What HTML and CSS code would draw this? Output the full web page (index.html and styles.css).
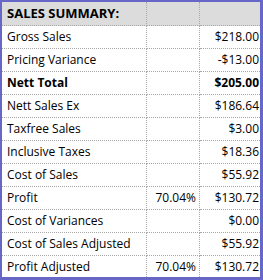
FILE: index.html
```html
<!DOCTYPE html>
<html>
<head>
<meta charset="utf-8">
<link rel="stylesheet" href="styles.css">
</head>
<body>
<div class="panel">
  <table class="summary">
    <colgroup>
      <col class="c-label">
      <col class="c-pct">
      <col class="c-amt">
    </colgroup>
    <tr class="head">
      <td>SALES SUMMARY:</td><td></td><td></td>
    </tr>
    <tr><td>Gross Sales</td><td></td><td class="num">$218.00</td></tr>
    <tr><td>Pricing Variance</td><td></td><td class="num">-$13.00</td></tr>
    <tr class="bold"><td>Nett Total</td><td></td><td class="num">$205.00</td></tr>
    <tr><td>Nett Sales Ex</td><td></td><td class="num">$186.64</td></tr>
    <tr><td>Taxfree Sales</td><td></td><td class="num">$3.00</td></tr>
    <tr><td>Inclusive Taxes</td><td></td><td class="num">$18.36</td></tr>
    <tr><td>Cost of Sales</td><td></td><td class="num">$55.92</td></tr>
    <tr><td>Profit</td><td class="pct">70.04%</td><td class="num">$130.72</td></tr>
    <tr><td>Cost of Variances</td><td></td><td class="num">$0.00</td></tr>
    <tr><td>Cost of Sales Adjusted</td><td></td><td class="num">$55.92</td></tr>
    <tr class="last"><td>Profit Adjusted</td><td class="pct">70.04%</td><td class="num">$130.72</td></tr>
  </table>
</div>
</body>
</html>
```
FILE: styles.css
```css
html, body {
  margin: 0;
  padding: 0;
  background: #ffffff;
}
.panel {
  width: 263px;
  height: 280px;
  box-sizing: border-box;
  border-style: solid;
  border-color: #6767c8;
  border-width: 2px 3px 3px 2px;
  background: #ffffff;
  overflow: hidden;
}
.summary {
  width: 258px;
  table-layout: fixed;
  border-collapse: separate;
  border-spacing: 0;
  font-family: "Open Sans", "Liberation Sans", sans-serif;
  font-size: 12px;
  color: #000000;
}
.c-label { width: 145px; }
.c-pct { width: 53px; }
.c-amt { width: 60px; }
.summary td {
  padding: 0 0 0 5px;
  line-height: 22px;
  height: 22px;
  white-space: nowrap;
  overflow: hidden;
  border-bottom: 1px dotted #a8a8a8;
  border-right: 1px dotted #a8a8a8;
}
.summary td:last-child {
  border-right: none;
}
.summary td.num {
  text-align: right;
  padding: 0 1px 0 0;
}
.summary td.pct {
  text-align: right;
  padding: 0 3px 0 0;
}
.head td {
  background: #dcdcdc;
  font-weight: bold;
  font-size: 13px;
  height: 23px;
  line-height: 23px;
}
.bold td {
  font-weight: bold;
}
.last td {
  border-bottom: none;
  height: 21px;
  line-height: 21px;
}
```
